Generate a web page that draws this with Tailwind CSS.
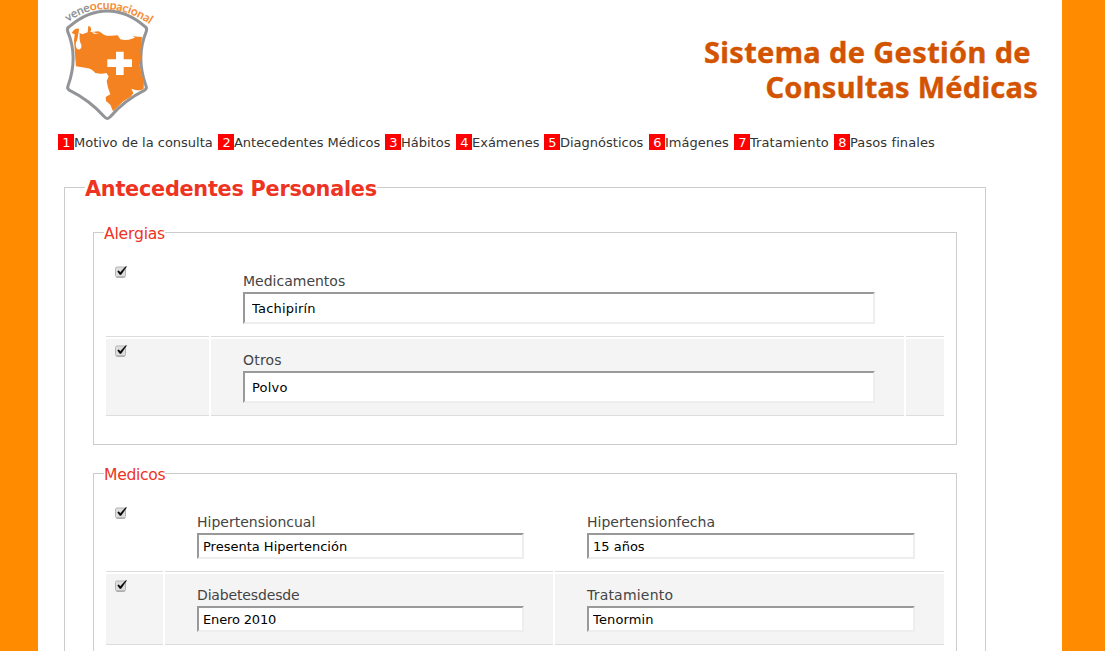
<!DOCTYPE html>
<html lang="es">
<head>
<meta charset="utf-8">
<title>Sistema de Gestión de Consultas Médicas</title>
<script src="https://cdn.jsdelivr.net/npm/@tailwindcss/browser@4"></script>
</head>
<body class="h-[651px] overflow-hidden bg-[#ff8c00] font-['DejaVu_Sans',sans-serif]">
<svg class="hidden">
  <symbol id="check" viewBox="0 0 12 12">
    <rect x=".5" y="1" width="10" height="10" rx="1.5" fill="#dedede" stroke="#b5b5b5"/>
    <path d="M1.5 11.2h8.2" stroke="#8f8f8f" stroke-width=".8"/>
    <path d="M2.6 5.4l1.3-.7 1.3 1.9L10.800.4l.8.2L6.100 8.500H4.800z" fill="#000" stroke="#000" stroke-width=".4"/>
  </symbol>
</svg>
<div class="ml-[38px] h-[651px] w-[1024px] overflow-hidden bg-white">
  <header class="flex h-[134px] justify-between pl-5">
    <svg class="h-[130px] w-[100px]" viewBox="84 0 300 390">
      <path id="arc" d="M114 66Q232 -20 376 84" fill="none"/>
      <text font-family="Lato, sans-serif" font-size="35" font-weight="500" fill="#888b8f" stroke="#888b8f" stroke-width=".6"><textPath href="#arc" textLength="263" lengthAdjust="spacingAndGlyphs">vene<tspan fill="#f58220" stroke="#f58220">ocupacional</tspan></textPath></text>
      <path d="M118 80Q172 33 232 33T345 80Q352 84 349 94C327 146 329 205 348 258Q352 266 343 271Q284 300 241 350Q232 361 223 350Q178 300 119 271Q110 266 114 258C133 205 135 146 113 94Q110 84 118 80Z" fill="#fff" stroke="#929497" stroke-width="9" stroke-linejoin="round"/>
      <path d="M125 99Q134 84 147 86L146 100Q151 98 157 103L173 97L175 77L182 82L184 91Q176 96 186 96L205 94Q214 96 212 100Q198 100 186 96L192 102L214 98Q222 109 245 107L263 106L271 118Q290 123 306 116L315 113L308 109L336 111L334 136L331 151L333 174L329 196L336 229L342 240L341 266Q333 273 316 270L304 266L310 280L302 290L280 304L249 334L241 314L228 303L227 291L241 283L234 263L230 243L236 229L229 219Q215 224 196 219Q185 205 170 204L138 199L136 176L134 147L132 122L134 103Z" fill="#f58220"/>
      <path d="M145 98Q143 120 138 127C133 155 158 154 154 134Q147 123 149 101Z" fill="#fff"/>
      <path d="M258 155h23v23h25v23h-25v24h-23v-24h-26v-23h26z" fill="#fff"/>
    </svg>
    <h1 class="pt-[34px] pr-6 text-right font-['Noto_Sans',sans-serif] text-[29px] leading-[35px] font-bold tracking-[0.25px] text-[#d35400] [-webkit-text-stroke:0.4px_#d35400]"><span class="mr-[7px] tracking-[0.35px]">Sistema de Gestión de</span><br>Consultas Médicas</h1>
  </header>
  <nav class="flex h-4 pl-5 text-[13px] leading-[18px] whitespace-nowrap text-[#333] *:flex">
    <a class="w-40"><b class="h-4 w-4 bg-[#ff0000] pl-px text-center font-normal text-white">1</b>Motivo de la consulta</a>
    <a class="w-[167px] tracking-[-0.03px]"><b class="h-4 w-4 bg-[#ff0000] pl-px text-center font-normal text-white">2</b>Antecedentes Médicos</a>
    <a class="w-[71px]"><b class="h-4 w-4 bg-[#ff0000] pl-px text-center font-normal text-white">3</b>Hábitos</a>
    <a class="w-[88px]"><b class="h-4 w-4 bg-[#ff0000] pl-px text-center font-normal text-white">4</b>Exámenes</a>
    <a class="w-[105px]"><b class="h-4 w-4 bg-[#ff0000] pl-px text-center font-normal text-white">5</b>Diagnósticos</a>
    <a class="w-[85px]"><b class="h-4 w-4 bg-[#ff0000] pl-px text-center font-normal text-white">6</b>Imágenes</a>
    <a class="w-[100px] tracking-[0.08px]"><b class="h-4 w-4 bg-[#ff0000] pl-px text-center font-normal text-white">7</b>Tratamiento</a>
    <a class="tracking-[0.1px]"><b class="h-4 w-4 bg-[#ff0000] pl-px text-center font-normal text-white">8</b>Pasos finales</a>
  </nav>
  <fieldset class="mt-[25px] ml-[26px] h-[600px] w-[922px] border border-[#ccc] px-7">
    <legend class="-ml-2 h-[25px] text-[20.8px] leading-[28px] font-bold tracking-[-0.25px] text-[#ee3322]">Antecedentes Personales</legend>
    <fieldset class="mt-[22px] h-[223px] w-[864px] border border-[#ccc] px-3">
      <legend class="-ml-0.5 h-[21px] text-[15.6px] leading-[24px] tracking-[-0.2px] text-[#ee3322]">Alergias</legend>
      <div class="mt-[17px] flex flex-col gap-0.5 text-[14px] text-[#444]">
        <div class="flex h-[77px] gap-0.5 *:border-b *:border-[#ddd]">
          <div class="w-[103px] pt-[6px] pl-[9px]"><svg class="size-3"><use href="#check"/></svg></div>
          <div class="w-[693px] pt-3 pl-8"><label class="block h-5 leading-[19px]">Medicamentos</label><input class="block h-8 w-[632px] border-2 border-t-[#999] border-r-[#eee] border-b-[#eee] border-l-[#999] bg-white px-[7px] text-[13px] tracking-[0.2px] text-black" value="Tachipirín"></div>
          <div class="w-[38px]"></div>
        </div>
        <div class="flex h-[77px] gap-0.5 *:border-b *:border-[#ddd] *:bg-[#f4f4f4]">
          <div class="w-[103px] pt-[6px] pl-[9px]"><svg class="size-3"><use href="#check"/></svg></div>
          <div class="w-[693px] pt-3 pl-8"><label class="block h-5 leading-[19px] tracking-[0.2px]">Otros</label><input class="block h-8 w-[632px] border-2 border-t-[#999] border-r-[#eee] border-b-[#eee] border-l-[#999] bg-white px-[7px] text-[13px] tracking-[0.2px] text-black" value="Polvo"></div>
          <div class="w-[38px]"></div>
        </div>
      </div>
    </fieldset>
    <fieldset class="mt-[18px] h-[223px] w-[864px] border border-[#ccc] px-3">
      <legend class="-ml-0.5 h-[21px] text-[15.6px] leading-[24px] tracking-[-0.3px] text-[#ee3322]">Medicos</legend>
      <div class="mt-[17px] flex flex-col gap-0.5 text-[14px] text-[#444]">
        <div class="flex h-[71px] gap-0.5 *:border-b *:border-[#ddd]">
          <div class="w-[57px] pt-[6px] pl-[9px]"><svg class="size-3"><use href="#check"/></svg></div>
          <div class="w-[388px] pt-3 pl-8"><label class="block h-5 leading-[19px]">Hipertensioncual</label><input class="block h-[26px] w-[327px] border-2 border-t-[#999] border-r-[#eee] border-b-[#eee] border-l-[#999] bg-white px-1 text-[13px] text-black" value="Presenta Hipertención"></div>
          <div class="w-[389px] pt-3 pl-8"><label class="block h-5 leading-[19px]">Hipertensionfecha</label><input class="block h-[26px] w-[328px] border-2 border-t-[#999] border-r-[#eee] border-b-[#eee] border-l-[#999] bg-white px-1 text-[13px] text-black" value="15 años"></div>
        </div>
        <div class="flex h-[71px] gap-0.5 *:border-b *:border-[#ddd] *:bg-[#f4f4f4]">
          <div class="w-[57px] pt-[6px] pl-[9px]"><svg class="size-3"><use href="#check"/></svg></div>
          <div class="w-[388px] pt-3 pl-8"><label class="block h-5 leading-[19px] tracking-[-0.15px]">Diabetesdesde</label><input class="block h-[26px] w-[327px] border-2 border-t-[#999] border-r-[#eee] border-b-[#eee] border-l-[#999] bg-white px-1 text-[13px] tracking-[-0.15px] text-black" value="Enero 2010"></div>
          <div class="w-[389px] pt-3 pl-8"><label class="block h-5 leading-[19px] tracking-[0.2px]">Tratamiento</label><input class="block h-[26px] w-[328px] border-2 border-t-[#999] border-r-[#eee] border-b-[#eee] border-l-[#999] bg-white px-1 text-[13px] tracking-[0.15px] text-black" value="Tenormin"></div>
        </div>
      </div>
    </fieldset>
  </fieldset>
</div>
</body>
</html>
